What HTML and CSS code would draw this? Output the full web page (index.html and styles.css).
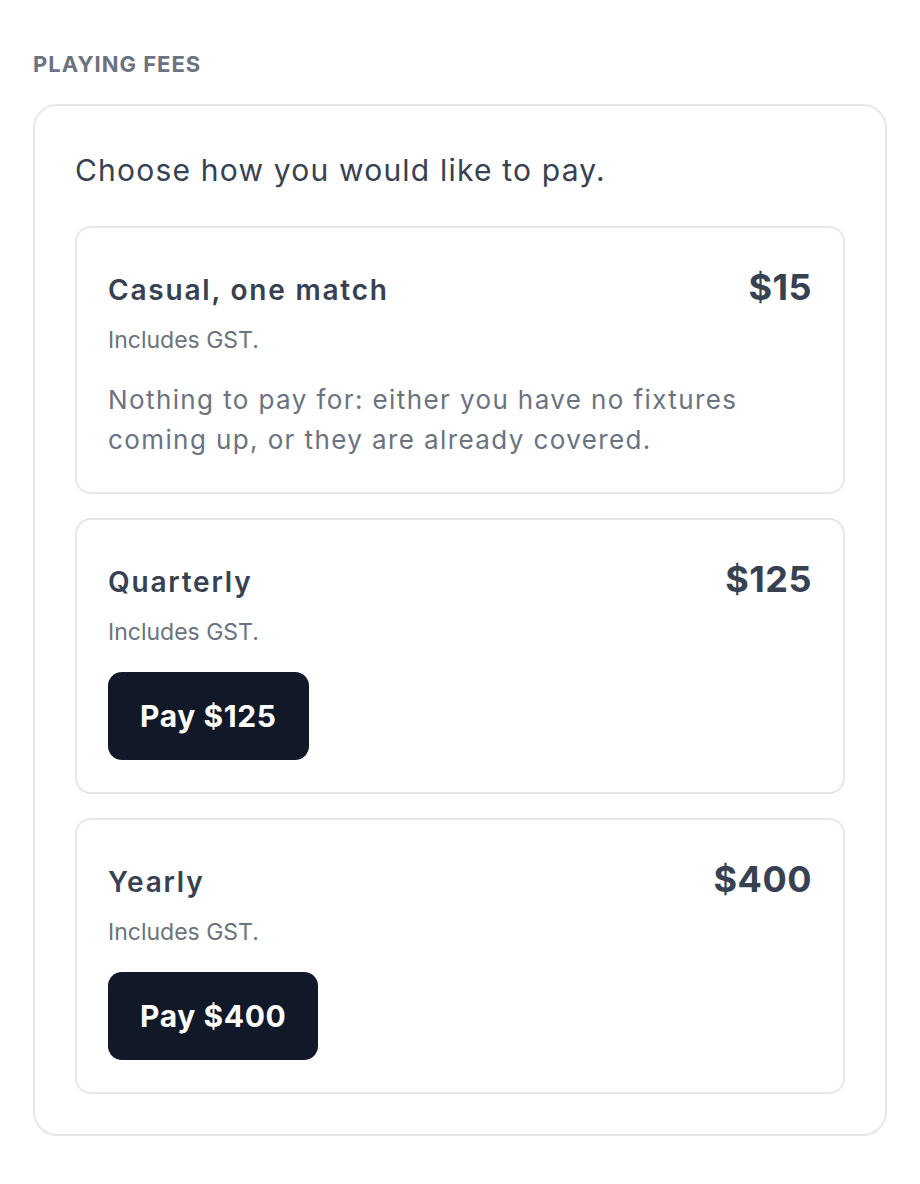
FILE: index.html
```html
<!DOCTYPE html>
<html lang="en">
<head>
  <meta charset="UTF-8">
  <title>Playing fees</title>
  <link rel="stylesheet" href="styles.css">
</head>
<body>

  <section class="fees">
    <h2 class="fees-label">Playing fees</h2>

    <div class="fees-card">
      <p class="fees-intro">Choose how you would like to pay.</p>

      <div class="plan-list">
        <div class="plan">
          <div class="plan-head">
            <h3 class="plan-name">Casual, one match</h3>
            <div class="plan-price">$15</div>
          </div>
          <p class="plan-note">Includes GST.</p>
          <p class="plan-desc">Nothing to pay for: either you have no fixtures coming up, or they are already covered.</p>
        </div>

        <div class="plan">
          <div class="plan-head">
            <h3 class="plan-name">Quarterly</h3>
            <div class="plan-price">$125</div>
          </div>
          <p class="plan-note">Includes GST.</p>
          <button class="pay-button">Pay $125</button>
        </div>

        <div class="plan">
          <div class="plan-head">
            <h3 class="plan-name">Yearly</h3>
            <div class="plan-price">$400</div>
          </div>
          <p class="plan-note">Includes GST.</p>
          <button class="pay-button">Pay $400</button>
        </div>
      </div>
    </div>
  </section>

</body>
</html>
```

FILE: styles.css
```css
body {
  margin: 0;
  background: #fff;
  font-family: "Inter", "Liberation Sans", sans-serif;
  color: #374151;
}
.fees {
  padding: 48px 33px 40px;
}
.fees-label {
  margin: 0 0 24px;
  font-size: 22px;
  line-height: 32px;
  font-weight: 700;
  letter-spacing: 1px;
  text-transform: uppercase;
  color: #6b7280;
}
.fees-card {
  border: 2px solid #e5e7eb;
  border-radius: 24px;
  padding: 40px;
}
.fees-intro {
  margin: 0 0 32px;
  font-size: 30px;
  line-height: 48px;
  letter-spacing: 1.2px;
  color: #374151;
}
.plan-list {
  display: flex;
  flex-direction: column;
  gap: 24px;
}
.plan {
  border: 2px solid #e5e7eb;
  border-radius: 16px;
  padding: 39px 32px 32px 31px;
}
.plan-head {
  display: flex;
  justify-content: space-between;
  align-items: baseline;
}
.plan-name {
  margin: 0;
  font-size: 28px;
  line-height: 40px;
  font-weight: 600;
  letter-spacing: 1.8px;
  color: #374151;
}
.plan-price {
  margin-right: -1px;
  font-size: 36px;
  line-height: 40px;
  font-weight: 700;
  letter-spacing: 0.5px;
  color: #374151;
}
.plan-note {
  margin: 14px 0 0;
  font-size: 23px;
  line-height: 32px;
  color: #6b7280;
}
.plan-desc {
  margin: 24px 0 0;
  font-size: 26px;
  line-height: 40px;
  letter-spacing: 1.4px;
  color: #6b7280;
}
.pay-button {
  display: block;
  margin-top: 24px;
  padding: 24px 32px;
  font-family: inherit;
  font-size: 30px;
  line-height: 40px;
  font-weight: 700;
  letter-spacing: 0.6px;
  color: #fff;
  background-color: #111827;
  border: none;
  border-radius: 14px;
  cursor: pointer;
}
```
